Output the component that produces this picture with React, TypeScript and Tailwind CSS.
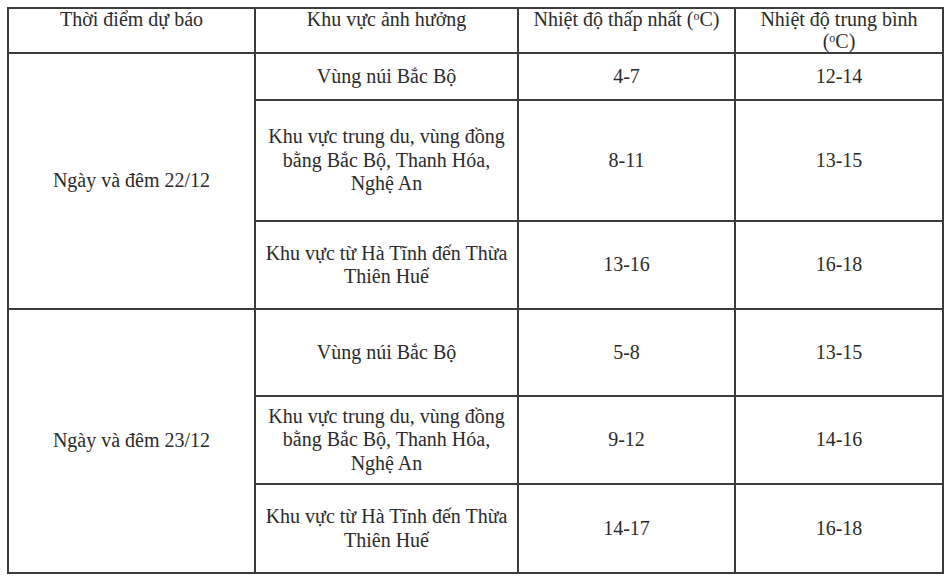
import React from 'react';

type Row = { area: string[]; min: string; avg: string; h: string };

const days: { label: string; rows: Row[] }[] = [
  {
    label: 'Ngày và đêm 22/12',
    rows: [
      { area: ['Vùng núi Bắc Bộ'], min: '4-7', avg: '12-14', h: 'h-[47px]' },
      {
        area: ['Khu vực trung du, vùng đồng', 'bằng Bắc Bộ, Thanh Hóa,', 'Nghệ An'],
        min: '8-11',
        avg: '13-15',
        h: 'h-[121px]',
      },
      { area: ['Khu vực từ Hà Tĩnh đến Thừa', 'Thiên Huế'], min: '13-16', avg: '16-18', h: 'h-[88px]' },
    ],
  },
  {
    label: 'Ngày và đêm 23/12',
    rows: [
      { area: ['Vùng núi Bắc Bộ'], min: '5-8', avg: '13-15', h: 'h-[87px]' },
      {
        area: ['Khu vực trung du, vùng đồng', 'bằng Bắc Bộ, Thanh Hóa,', 'Nghệ An'],
        min: '9-12',
        avg: '14-16',
        h: 'h-[88px]',
      },
      { area: ['Khu vực từ Hà Tĩnh đến Thừa', 'Thiên Huế'], min: '14-17', avg: '16-18', h: 'h-[89px]' },
    ],
  },
];

const cell = 'border-2 border-[#3c3c3c] text-center align-middle p-0';
const head = 'border-2 border-[#3c3c3c] text-center align-top font-normal px-1 pt-0 leading-[21.5px]';

// degree mark sits raised without pushing the line box
const Deg = () => <span className="relative -top-[6px] text-[12px] leading-none">o</span>;

export default function App() {
  return (
    <div className="h-[584px] w-[951px] bg-white pl-[7px] pt-[7px] font-['Liberation_Serif',serif] text-[20px] leading-[23.5px] text-[#2b2b2b]">
      <table className="w-[935px] table-fixed border-collapse">
        <colgroup>
          <col className="w-[247px]" />
          <col className="w-[263px]" />
          <col className="w-[217px]" />
          <col className="w-[208px]" />
        </colgroup>
        <thead>
          <tr className="h-[45px]">
            <th className={head}>Thời điểm dự báo</th>
            <th className={head}>Khu vực ảnh hưởng</th>
            <th className={head}>
              Nhiệt độ thấp nhất (<Deg />C)
            </th>
            <th className={head}>
              <div>Nhiệt độ trung bình</div>
              <div>
                (<Deg />C)
              </div>
            </th>
          </tr>
        </thead>
        <tbody>
          {days.map((d) =>
            d.rows.map((r, i) => (
              <tr key={d.label + i} className={r.h}>
                {i === 0 && (
                  <td rowSpan={3} className={cell}>
                    {d.label}
                  </td>
                )}
                <td className={cell}>
                  {r.area.map((line, j) => (
                    <div key={j}>{line}</div>
                  ))}
                </td>
                <td className={cell}>{r.min}</td>
                <td className={cell}>{r.avg}</td>
              </tr>
            ))
          )}
        </tbody>
      </table>
    </div>
  );
}
